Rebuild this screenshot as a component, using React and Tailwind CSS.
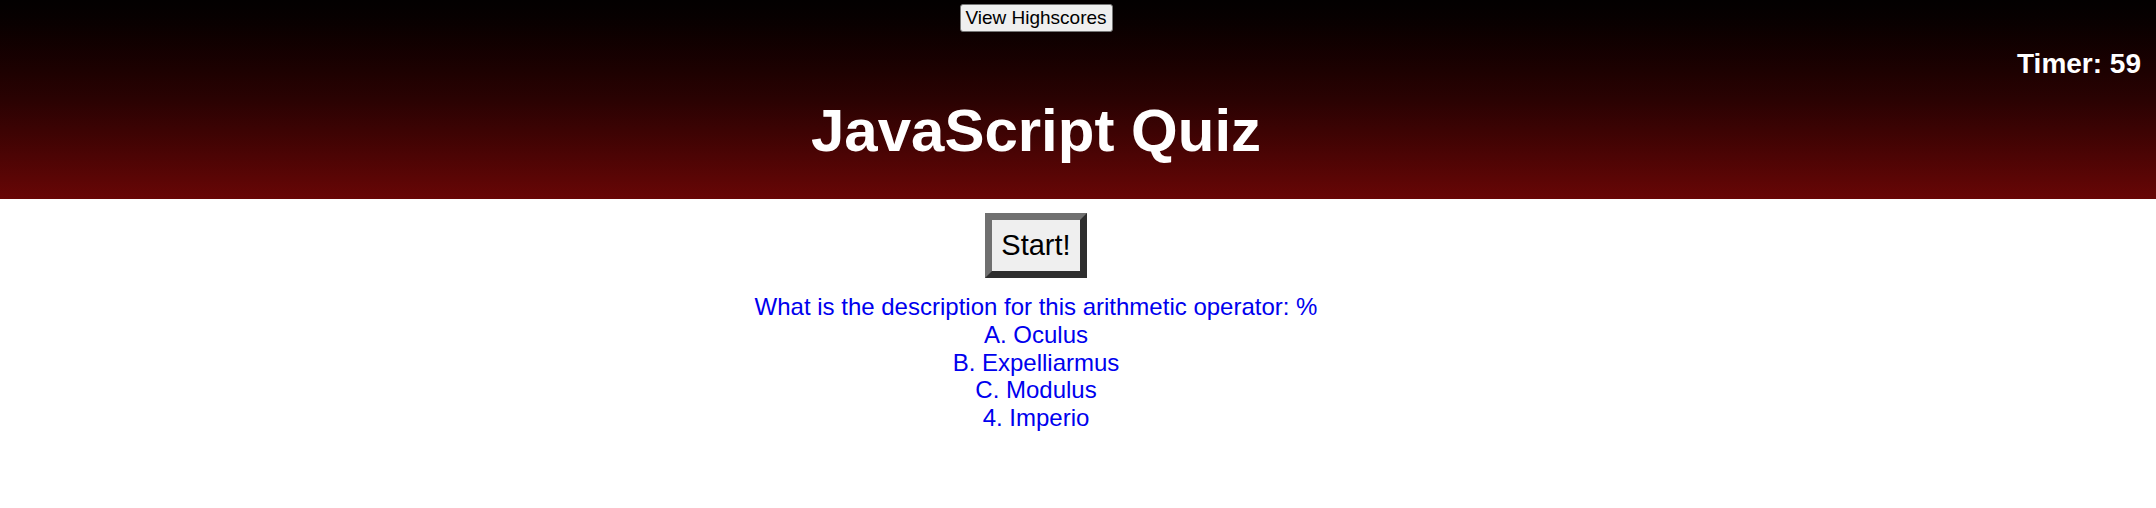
export default function App() {
  const options = ["A. Oculus", "B. Expelliarmus", "C. Modulus", "4. Imperio"];
  return (
    <div className="min-h-[508px] bg-white font-['Liberation_Sans',Arial,sans-serif]">
      <header className="flex h-[199px] flex-col bg-gradient-to-b from-[#030000] via-[#2a0202] to-[#680606]">
        <div className="flex justify-center pr-[84px] pt-[4px]">
          <button className="flex h-[28px] w-[153px] items-center justify-center rounded-[3px] border border-[#767676] bg-[#efefef] text-black">
            <span className="whitespace-nowrap text-[19px] leading-[22px]">View Highscores</span>
          </button>
        </div>
        <div className="mt-[16px] pr-[15px] text-right text-[28px] font-bold leading-[32px] text-white">
          Timer: 59
        </div>
        <h1 className="mt-[16px] pr-[84px] text-center text-[60px] font-bold leading-[69px] text-white">
          JavaScript Quiz
        </h1>
      </header>
      <main className="flex flex-col items-center pr-[84px]">
        <button className="mt-[14px] h-[65px] w-[102px] border-[7px] border-t-[#707070] border-l-[#707070] border-b-[#2e2e2e] border-r-[#2e2e2e] bg-[#efefef] text-[29px] leading-none text-black">
          Start!
        </button>
        <div className="mt-[15px] text-center text-[24px] leading-[27.8px] text-[#0000ee]">
          <div>What is the description for this arithmetic operator: %</div>
          {options.map((o) => (
            <div key={o}>{o}</div>
          ))}
        </div>
      </main>
    </div>
  );
}
